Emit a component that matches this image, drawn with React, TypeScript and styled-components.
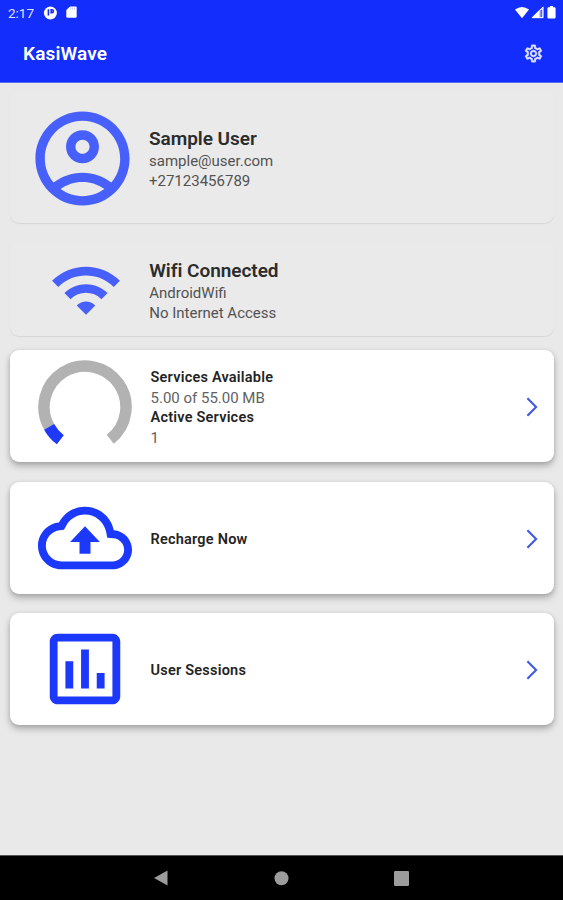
import React from 'react';
import styled, { createGlobalStyle } from 'styled-components';

const GlobalStyle = createGlobalStyle`
  * { box-sizing: border-box; }
  body { margin: 0; background: #e9e9e9; font-family: Roboto, "Liberation Sans", sans-serif; }
`;

const Screen = styled.div`
  width: 563px;
  height: 900px;
  display: flex;
  flex-direction: column;
  overflow: hidden;
  background: #e9e9e9;
`;

const Header = styled.header`
  height: 83px;
  flex: none;
  background: #132dfd;
  color: #fff;
  border-bottom: 1px solid #5a6bf3;
`;

const StatusBar = styled.div`
  height: 25px;
  padding: 0 5px 0 8px;
  display: flex;
  align-items: center;
  justify-content: space-between;
`;

const StatusGroup = styled.div<{ $gap: number }>`
  display: flex;
  align-items: center;
  gap: ${(p) => p.$gap}px;
`;

const Clock = styled.span`
  font-size: 13.5px;
  line-height: 16px;
  color: #dfe3ff;
`;

const AppBar = styled.div`
  height: 57px;
  padding: 0 19.5px 0 23px;
  display: flex;
  align-items: center;
  justify-content: space-between;
`;

const Title = styled.h1`
  margin: 0;
  padding-top: 1px;
  font-size: 19px;
  font-weight: 600;
  line-height: 24px;
  letter-spacing: 0.15px;
`;

const Content = styled.main`
  flex: 1;
  padding: 7px 9.5px 0;
  display: flex;
  flex-direction: column;
`;

const Card = styled.section<{ $height: number; $gap: number; $raised?: boolean }>`
  height: ${(p) => p.$height}px;
  margin-bottom: ${(p) => p.$gap}px;
  flex: none;
  display: flex;
  align-items: center;
  border-radius: 9px;
  background: ${(p) => (p.$raised ? '#fff' : '#eaeaea')};
  box-shadow: ${(p) =>
    p.$raised
      ? '0 4px 7px rgba(0,0,0,0.25), 0 1px 4px rgba(0,0,0,0.1)'
      : '0 1px 1px rgba(0,0,0,0.08)'};
`;

const IconCell = styled.div<{ $center: number; $size: number; $drop?: number }>`
  width: 140px;
  flex: none;
  padding-left: ${(p) => p.$center - p.$size / 2}px;
  padding-top: ${(p) => p.$drop ?? 0}px;
  display: flex;
`;

const TextCell = styled.div<{ $shift?: number; $drop?: number }>`
  flex: 1;
  padding-top: ${(p) => p.$drop ?? 0}px;
  margin-left: ${(p) => p.$shift ?? 0}px;
`;

const Heading = styled.h2`
  margin: 0;
  font-size: 19px;
  font-weight: 600;
  line-height: 24px;
  letter-spacing: -0.04px;
  color: #2c2c2c;
`;

const Label = styled.h3`
  margin: 0;
  font-size: 14.5px;
  font-weight: 600;
  line-height: 20px;
  letter-spacing: 0.22px;
  color: #242424;
`;

const Line = styled.p<{ $light?: boolean }>`
  margin: 0;
  font-size: 15px;
  line-height: 20px;
  color: ${(p) => (p.$light ? '#626262' : '#525252')};
`;

const ChevronCell = styled.div`
  display: flex;
  padding: 1px 14.5px 0 0;
`;

const NavBar = styled.nav`
  height: 45px;
  flex: none;
  background: #000;
  border-top: 1px solid #555;
  display: flex;
  align-items: center;
  justify-content: center;
  gap: 105px;
  svg { display: block; }
`;

const Chevron = () => (
  <ChevronCell>
    <svg width="14" height="22" viewBox="0 0 14 22" fill="none" stroke="#4059e6" strokeWidth="2.1">
      <path d="M2.4 2.2L11.1 11L2.4 19.8" />
    </svg>
  </ChevronCell>
);

const MaterialIcon = ({ size, color, d, stroke = 0 }: { size: number; color: string; d: string; stroke?: number }) => (
  <svg width={size} height={size} viewBox="0 0 24 24" fill={color} stroke={color} strokeWidth={stroke}>
    <path d={d} />
  </svg>
);

const ACCOUNT =
  'M12 2C6.48 2 2 6.48 2 12s4.48 10 10 10 10-4.48 10-10S17.52 2 12 2zM7.35 18.5C8.66 17.56 10.26 17 12 17s3.34.56 4.65 1.5C15.34 19.44 13.74 20 12 20s-3.34-.56-4.65-1.5zm10.79-1.38C16.45 15.8 14.32 15 12 15s-4.45.8-6.14 2.12C4.7 15.73 4 13.95 4 12c0-4.42 3.58-8 8-8s8 3.58 8 8c0 1.95-.7 3.73-1.86 5.12zM12 6c-1.93 0-3.5 1.57-3.5 3.5S10.07 13 12 13s3.5-1.57 3.5-3.5S13.93 6 12 6zm0 5c-.83 0-1.5-.67-1.5-1.5S11.17 8 12 8s1.5.67 1.5 1.5S12.83 11 12 11z';
const WIFI =
  'M1 9l2 2c4.97-4.97 13.03-4.97 18 0l2-2C16.93 2.93 7.08 2.93 1 9zm8 8l3 3 3-3c-1.65-1.66-4.34-1.66-6 0zm-4-4l2 2c2.76-2.76 7.24-2.76 10 0l2-2C15.14 9.14 8.87 9.14 5 13z';
const BACKUP =
  'M19.35 10.04C18.67 6.59 15.64 4 12 4 9.11 4 6.6 5.64 5.35 8.04 2.34 8.36 0 10.91 0 14c0 3.31 2.69 6 6 6h13c2.76 0 5-2.24 5-5 0-2.64-2.05-4.78-4.65-4.96zM19 18H6c-2.21 0-4-1.79-4-4 0-2.05 1.53-3.76 3.56-3.97l1.07-.11.5-.95C8.08 7.14 9.94 6 12 6c2.62 0 4.88 1.86 5.39 4.43l.3 1.5 1.53.11c1.56.1 2.78 1.41 2.78 2.96 0 1.65-1.35 3-3 3zM8.2 13h2.4v3h2.8v-3h2.4L12 9z';
const ASSESSMENT =
  'M19 3H5c-1.1 0-2 .9-2 2v14c0 1.1.9 2 2 2h14c1.1 0 2-.9 2-2V5c0-1.1-.9-2-2-2zm0 16H5V5h14v14zM7 10h2v7H7zM11 7h2v10h-2zM15 13h2v4h-2z';
const SETTINGS =
  'M19.43 12.98c.04-.32.07-.64.07-.98 0-.34-.03-.66-.07-.98l2.11-1.65c.19-.15.24-.42.12-.64l-2-3.46c-.09-.16-.26-.25-.44-.25-.06 0-.12.01-.17.03l-2.49 1c-.52-.4-1.08-.73-1.69-.98l-.38-2.65C14.46 2.18 14.25 2 14 2h-4c-.25 0-.46.18-.49.42l-.38 2.65c-.61.25-1.17.59-1.69.98l-2.49-1c-.06-.02-.12-.03-.18-.03-.17 0-.34.09-.43.25l-2 3.46c-.13.22-.07.49.12.64l2.11 1.65c-.04.32-.07.65-.07.98 0 .33.03.66.07.98l-2.11 1.65c-.19.15-.24.42-.12.64l2 3.46c.09.16.26.25.44.25.06 0 .12-.01.17-.03l2.49-1c.52.4 1.08.73 1.69.98l.38 2.65c.03.24.24.42.49.42h4c.25 0 .46-.18.49-.42l.38-2.65c.61-.25 1.17-.59 1.69-.98l2.49 1c.06.02.12.03.18.03.17 0 .34-.09.43-.25l2-3.46c.12-.22.07-.49-.12-.64l-2.11-1.65zm-1.98-1.71c.04.31.05.52.05.73 0 .21-.02.43-.05.73l-.14 1.13.89.7 1.08.84-.7 1.21-1.27-.51-1.04-.42-.9.68c-.43.32-.84.56-1.25.73l-1.06.43-.16 1.13-.2 1.35h-1.4l-.19-1.35-.16-1.13-1.06-.43c-.43-.18-.83-.41-1.23-.71l-.91-.7-1.06.43-1.27.51-.7-1.21 1.08-.84.89-.7-.14-1.13c-.03-.31-.05-.54-.05-.74s.02-.43.05-.73l.14-1.13-.89-.7-1.08-.84.7-1.21 1.27.51 1.04.42.9-.68c.43-.32.84-.56 1.25-.73l1.06-.43.16-1.13.2-1.35h1.39l.19 1.35.16 1.13 1.06.43c.43.18.83.41 1.23.71l.91.7 1.06-.43 1.27-.51.7 1.21-1.07.85-.89.7.14 1.13zM12 8c-2.21 0-4 1.79-4 4s1.79 4 4 4 4-1.79 4-4-1.79-4-4-4zm0 6c-1.1 0-2-.9-2-2s.9-2 2-2 2 .9 2 2-.9 2-2 2z';

const polar = (deg: number) => {
  const a = (deg * Math.PI) / 180;
  return `${(47 + 41 * Math.cos(a)).toFixed(2)} ${(47 + 41 * Math.sin(a)).toFixed(2)}`;
};

const Gauge = () => (
  <svg width="94" height="94" viewBox="0 0 94 94" fill="none" strokeWidth="11.5">
    <path d={`M${polar(150.5)} A41 41 0 1 1 ${polar(52)}`} stroke="#b2b2b2" />
    <path d={`M${polar(127)} A41 41 0 0 1 ${polar(151)}`} stroke="#1f39f8" />
  </svg>
);

export default function App() {
  return (
    <>
      <GlobalStyle />
      <Screen>
        <Header>
          <StatusBar>
            <StatusGroup $gap={9}>
              <Clock>2:17</Clock>
              <svg width="14" height="14" viewBox="0 0 14 14">
                <circle cx="7.4" cy="7" r="6.5" fill="#fff" />
                <path d="M5.4 3.2V9.6M8.2 3.8H9Q10.4 3.8 10.4 5.2T9 6.6H8.2Z" stroke="#132dfd" strokeWidth="1.6" fill="none" />
              </svg>
              <svg width="11" height="13" viewBox="0 0 11 13">
                <path d="M4 .4H9.5Q10.7.4 10.7 1.6V10.6Q10.7 11.8 9.5 11.8H1.5Q.3 11.8.3 10.6V4Z" fill="#fff" />
                <path d="M4.7 1.6V3.6M6.6 1.6V3.6M8.5 1.6V3.6" stroke="#a9b3ff" strokeWidth=".7" />
              </svg>
            </StatusGroup>
            <StatusGroup $gap={1.5}>
              <svg width="14" height="12" viewBox="0 0 14 12">
                <path d="M0 2.6Q7-2.6 14 2.6L7 11.3Z" fill="#fff" />
              </svg>
              <svg width="13" height="13" viewBox="0 0 13 13">
                <path d="M.5 12L12.3.3V12Z" fill="#b2bbff" />
                <path d="M.5 12L8.4 4.2V12Z" fill="#fff" />
                <path d="M10.2 4V11" stroke="#3c52fd" strokeWidth="1.2" />
                <path d="M1.2 11.7L12 1V11.7Z" fill="none" stroke="#fff" strokeWidth=".9" />
              </svg>
              <svg width="13" height="13" viewBox="0 0 13 13">
                <path d="M4.9 0H8.1V1.2H9.4Q10.6 1.2 10.6 2.4V11.2Q10.6 12.4 9.4 12.4H3.6Q2.4 12.4 2.4 11.2V2.4Q2.4 1.2 3.6 1.2H4.9Z" fill="#fff" />
              </svg>
            </StatusGroup>
          </StatusBar>
          <AppBar>
            <Title>KasiWave</Title>
            <MaterialIcon size={21} color="#dde2ff" stroke={0.35} d={SETTINGS} />
          </AppBar>
        </Header>
        <Content>
          <Card $height={133} $gap={20}>
            <IconCell $center={73.3} $size={113} $drop={3}>
              <MaterialIcon size={113} color="#4860fb" d={ACCOUNT} />
            </IconCell>
            <TextCell $shift={-0.5} $drop={5}>
              <Heading>Sample User</Heading>
              <Line>sample@user.com</Line>
              <Line>+27123456789</Line>
            </TextCell>
          </Card>
          <Card $height={93} $gap={14}>
            <IconCell $center={76.3} $size={74}>
              <MaterialIcon size={74} color="#4860fb" d={WIFI} />
            </IconCell>
            <TextCell $shift={-0.3} $drop={2}>
              <Heading>Wifi Connected</Heading>
              <Line>AndroidWifi</Line>
              <Line>No Internet Access</Line>
            </TextCell>
          </Card>
          <Card $height={112} $gap={20} $raised>
            <IconCell $center={75.5} $size={94} $drop={2}>
              <Gauge />
            </IconCell>
            <TextCell $shift={1} $drop={3}>
              <Label>Services Available</Label>
              <Line $light>5.00 of 55.00 MB</Line>
              <Label>Active Services</Label>
              <Line $light>1</Line>
            </TextCell>
            <Chevron />
          </Card>
          <Card $height={112} $gap={19} $raised>
            <IconCell $center={75.5} $size={94}>
              <MaterialIcon size={94} color="#1c38fa" d={BACKUP} />
            </IconCell>
            <TextCell $shift={1} $drop={3}>
              <Label>Recharge Now</Label>
            </TextCell>
            <Chevron />
          </Card>
          <Card $height={112} $gap={0} $raised>
            <IconCell $center={75.5} $size={94}>
              <MaterialIcon size={94} color="#1c38fa" d={ASSESSMENT} />
            </IconCell>
            <TextCell $shift={1} $drop={4}>
              <Label>User Sessions</Label>
            </TextCell>
            <Chevron />
          </Card>
        </Content>
        <NavBar>
          <svg width="15" height="16" viewBox="0 0 15 16">
            <path d="M0 8L13.5 .4V15.6Z" fill="#9c9c9c" />
          </svg>
          <svg width="15" height="15" viewBox="0 0 15 15">
            <circle cx="7.5" cy="7.2" r="7" fill="#9c9c9c" />
          </svg>
          <svg width="15" height="15" viewBox="0 0 15 15">
            <rect width="15" height="15" rx="1.2" fill="#9c9c9c" />
          </svg>
        </NavBar>
      </Screen>
    </>
  );
}
